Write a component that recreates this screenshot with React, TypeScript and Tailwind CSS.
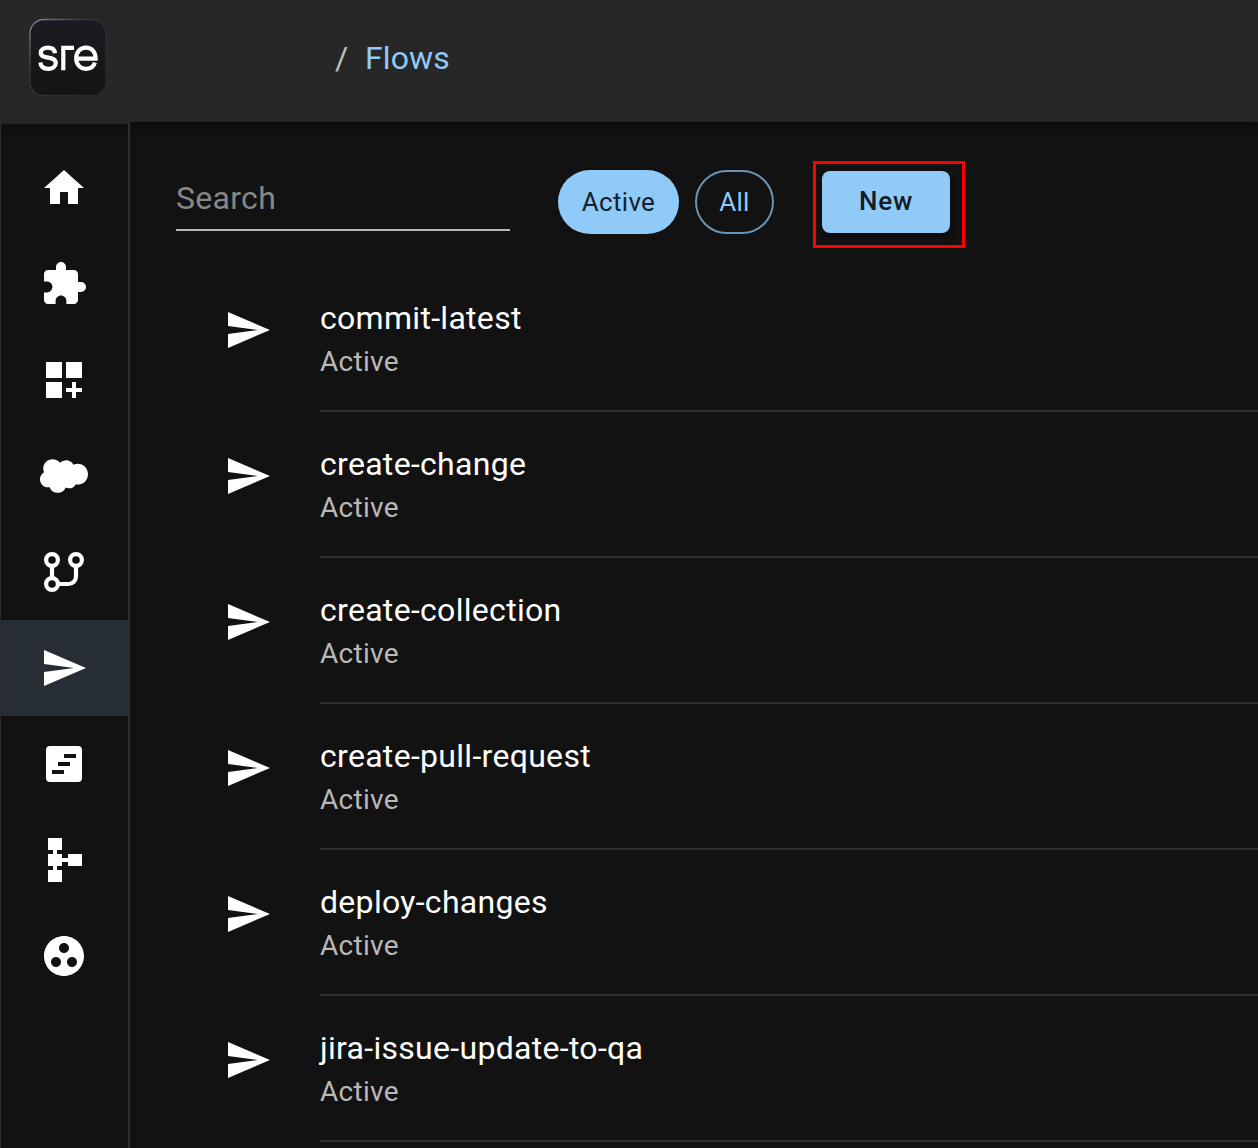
import type { ReactNode } from 'react';

function Icon({ children }: { children: ReactNode }) {
  return (
    <svg viewBox="0 0 24 24" className="size-12 shrink-0" fill="#fff">
      {children}
    </svg>
  );
}

const send = <path d="M2.01 21 23 12 2.01 3 2 10l15 2-15 2z" />;

const navItems: { name: string; icon: ReactNode; selected?: boolean }[] = [
  { name: 'Home', icon: <path d="M10 20v-6h4v6h5v-8h3L12 3 2 12h3v8z" /> },
  {
    name: 'Plugins',
    icon: (
      <path d="M20.5 11H19V7c0-1.1-.9-2-2-2h-4V3.5a2.5 2.5 0 0 0-5 0V5H4c-1.1 0-1.99.9-1.99 2v3.8H3.5c1.49 0 2.7 1.21 2.7 2.7s-1.21 2.7-2.7 2.7H2V20c0 1.1.9 2 2 2h3.8v-1.5c0-1.49 1.21-2.7 2.7-2.7s2.7 1.21 2.7 2.7V22H17c1.1 0 2-.9 2-2v-4h1.5a2.5 2.5 0 0 0 0-5z" />
    ),
  },
  {
    name: 'Collections',
    icon: <path d="M3 3h8v8H3zM13 3h8v8h-8zM3 13h8v8H3zM18 13h-2v3h-3v2h3v3h2v-3h3v-2h-3z" />,
  },
  {
    name: 'Orgs',
    icon: (
      <path d="M10.006 5.415a4.195 4.195 0 013.045-1.306c1.56 0 2.954.9 3.69 2.205.63-.3 1.35-.45 2.1-.45 2.85 0 5.159 2.34 5.159 5.22s-2.31 5.22-5.176 5.22c-.345 0-.69-.044-1.02-.104a3.75 3.75 0 01-3.3 1.95c-.6 0-1.155-.15-1.65-.375A4.314 4.314 0 018.88 20.4a4.302 4.302 0 01-4.05-2.82c-.27.062-.54.076-.825.076-2.204 0-4.005-1.8-4.005-4.05 0-1.5.811-2.805 2.01-3.51-.255-.57-.39-1.2-.39-1.846 0-2.58 2.1-4.65 4.65-4.65 1.53 0 2.85.705 3.72 1.8z" />
    ),
  },
  {
    name: 'Branches',
    icon: (
      <g fill="none" stroke="#fff" strokeWidth="2.1">
        <circle cx="6" cy="6" r="2.95" />
        <circle cx="18" cy="6" r="2.95" />
        <circle cx="6" cy="18" r="2.95" />
        <path d="M6 9v6M9 18h5.300a3.700 3.700 0 0 0 3.700-3.700V9" />
      </g>
    ),
  },
  { name: 'Flows', icon: send, selected: true },
  {
    name: 'Runs',
    icon: (
      <path
        fillRule="evenodd"
        d="M5 3h14a2 2 0 0 1 2 2v14a2 2 0 0 1-2 2H5a2 2 0 0 1-2-2V5a2 2 0 0 1 2-2zM12 7v2h6V7zM9 11v2h6v-2zM6 15v2h6v-2z"
      />
    ),
  },
  { name: 'Schema', icon: <path d="M14 9v2h-3V9H8.500V7H11V1H4v6h2.500v2H4v6h2.500v2H4v6h7v-6H8.500v-2H11v-2h3v2h7V9z" /> },
  {
    name: 'Groups',
    icon: (
      <path d="M12 2C6.480 2 2 6.480 2 12s4.480 10 10 10 10-4.480 10-10S17.520 2 12 2zM8 17.500c-1.380 0-2.500-1.120-2.500-2.500s1.120-2.500 2.500-2.500 2.500 1.120 2.500 2.500-1.120 2.500-2.500 2.500zM9.500 8c0-1.380 1.120-2.500 2.500-2.500s2.500 1.120 2.500 2.500-1.120 2.500-2.500 2.500S9.500 9.380 9.500 8zm6.500 9.500c-1.380 0-2.500-1.120-2.500-2.500s1.120-2.500 2.500-2.500 2.500 1.120 2.500 2.500-1.120 2.500-2.500 2.500z" />
    ),
  },
];

const flows = [
  'commit-latest',
  'create-change',
  'create-collection',
  'create-pull-request',
  'deploy-changes',
  'jira-issue-update-to-qa',
];

function Logo() {
  return (
    <svg viewBox="0 0 78 78" className="size-[78px]" fill="none">
      <defs>
        <linearGradient id="face" x1="0" y1="0" x2="0" y2="1">
          <stop offset="0" stopColor="#1b1b21" />
          <stop offset="1" stopColor="#141417" />
        </linearGradient>
        <linearGradient id="edge" x1="0" y1="0" x2="1" y2="1">
          <stop offset="0" stopColor="#8b8b98" />
          <stop offset="0.35" stopColor="#34343e" />
          <stop offset="1" stopColor="#24242b" />
        </linearGradient>
      </defs>
      <rect x="1" y="1.500" width="76" height="76" rx="14" fill="url(#face)" stroke="url(#edge)" strokeWidth="1.300" />
      <g stroke="#fff" strokeWidth="4.200">
        <path d="M26 35.200C25.600 31.700 22.900 29.700 18.900 29.700c-4.200 0-7.100 2-7.100 5 0 7.400 15 2.400 15 10.300 0 3.500-3.200 5.800-7.500 5.800-4.600 0-7.600-2.200-7.900-6.300" />
        <path d="M34.300 52.200V29.900H45" />
        <path d="M47.500 40.600H66.600C66.600 34 62.800 29.700 57 29.700S47.200 34 47.200 40.300 51.200 50.800 57 50.800c4.400 0 7.800-2.200 8.900-6.300" />
      </g>
    </svg>
  );
}

export default function App() {
  return (
    <div className="flex h-[1148px] w-[1258px] flex-col overflow-hidden bg-[#121212] font-['Roboto',sans-serif] text-white">
      <header className="relative z-10 flex h-[122px] shrink-0 items-start bg-[#272727] shadow-[0_4px_8px_rgba(0,0,0,0.4)]">
        <div className="ml-[29px] mt-[18px] w-[306px]">
          <Logo />
        </div>
        <div className="mt-[34px] flex text-[32px] leading-12 tracking-[0.1px]">
          <span className="w-[30px] text-[#bebebe]">/</span>
          <span className="text-[#90caf9]">Flows</span>
        </div>
      </header>
      <div className="flex min-h-0 flex-1">
        <nav className="relative z-20 w-[130px] shrink-0 border-t-2 border-r-2 border-l border-t-[#232323] border-l-[#2a2a2a] border-r-[#2e2e2e] pt-4">
          {navItems.map((item) => (
            <div
              key={item.name}
              title={item.name}
              className={item.selected ? 'flex h-24 items-center bg-[#262d35] pl-[39px]' : 'flex h-24 items-center pl-[39px]'}
            >
              <Icon>{item.icon}</Icon>
            </div>
          ))}
        </nav>
        <main className="min-w-0 flex-1 pl-[46px]">
          <div className="flex h-36 items-start pt-[39px]">
            <div className="mt-[5px] h-[65px] w-[334px] border-b-2 border-[#b6b8b8] pt-[9px] text-[32px] leading-[46px] tracking-[0.3px] text-[#878787]">
              Search
            </div>
            <div className="mt-[9px] ml-12 flex h-16 w-[121px] items-center justify-center rounded-full bg-[#90caf9] text-[26px] tracking-[0.3px] text-[#12212c]">
              Active
            </div>
            <div className="mt-[9px] ml-4 flex h-16 w-[79px] items-center justify-center rounded-full border-2 border-[#6a93b4] text-[26px] tracking-[0.3px] text-[#90caf9]">
              All
            </div>
            <div className="ml-[39px] h-[87px] w-[152px] border-3 border-[#fe0000] pt-[7px] pl-[6px]">
              <div className="flex h-[62px] w-32 items-center justify-center rounded-lg bg-[#90caf9] pb-px text-[26px] font-medium tracking-[0.8px] text-[#111c24] shadow-[0_4px_6px_rgba(0,0,0,0.5)]">
                New
              </div>
            </div>
          </div>
          <ul>
            {flows.map((name) => (
              <li key={name} className="flex h-[146px] pl-12">
                <div className="w-24 shrink-0 pt-10">
                  <Icon>{send}</Icon>
                </div>
                <div className="min-w-0 flex-1 border-b-2 border-[#2e2e2e] pt-7">
                  <p className="text-[32px] leading-12 tracking-[0.3px]">{name}</p>
                  <p className="text-[28px] leading-10 tracking-[0.3px] text-[#b8b8b8]">Active</p>
                </div>
              </li>
            ))}
          </ul>
        </main>
      </div>
    </div>
  );
}
